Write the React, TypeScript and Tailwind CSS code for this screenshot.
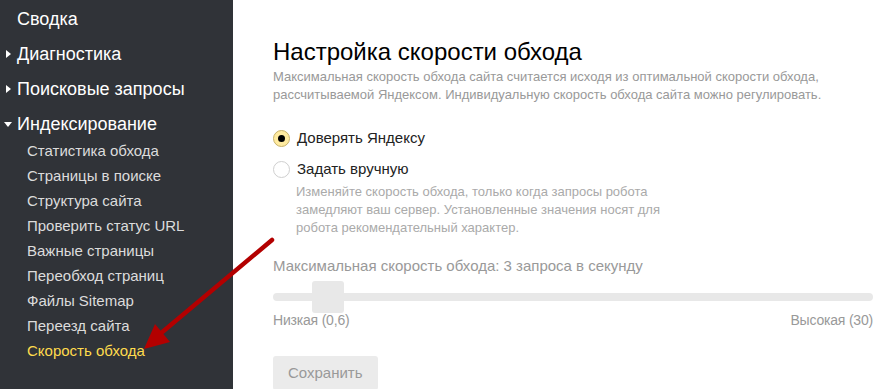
import React from "react";

const font = { fontFamily: '"Liberation Sans", Arial, sans-serif' };

function Caret({ down }: { down?: boolean }) {
  return down ? (
    <svg width="8" height="6" viewBox="0 0 8 6" className="absolute left-[4px] top-[10px]">
      <path d="M0 0 L8 0 L4 5 Z" fill="#fff" />
    </svg>
  ) : (
    <svg width="6" height="8" viewBox="0 0 6 8" className="absolute left-[6px] top-[8px]">
      <path d="M0 0 L5 4 L0 8 Z" fill="#fff" />
    </svg>
  );
}

export default function App() {
  const sub = [
    "Статистика обхода",
    "Страницы в поиске",
    "Структура сайта",
    "Проверить статус URL",
    "Важные страницы",
    "Переобход страниц",
    "Файлы Sitemap",
    "Переезд сайта",
  ];
  return (
    <div className="relative flex w-[887px] h-[389px] overflow-hidden bg-white" style={font}>
      <aside className="w-[233px] shrink-0 bg-[#303338] text-white pt-[7px]">
        <div className="pl-[17px] text-[18px] leading-[24px] h-[35px]">Сводка</div>
        <div className="relative pl-[17px] text-[18px] leading-[24px] h-[35px]">
          <Caret />
          Диагностика
        </div>
        <div className="relative pl-[17px] text-[18px] leading-[24px] h-[35px]">
          <Caret />
          Поисковые запросы
        </div>
        <div className="relative pl-[17px] text-[18px] leading-[24px] h-[29px]">
          <Caret down />
          Индексирование
        </div>
        <ul className="pl-[27px] text-[15px] text-[#dcdcdc]">
          {sub.map((s) => (
            <li key={s} className="h-[25px] leading-[20px]">
              {s}
            </li>
          ))}
          <li className="h-[25px] leading-[20px] text-[#ffdb4d]">Скорость обхода</li>
        </ul>
      </aside>
      <main className="flex-1 pl-[40px] pt-[37px]">
        <h1 className="text-[24px] leading-[30px] text-[#000]">Настройка скорости обхода</h1>
        <p className="mt-[1px] text-[13px] leading-[18px] text-[#999]">
          Максимальная скорость обхода сайта считается исходя из оптимальной скорости обхода,
          <br />
          рассчитываемой Яндексом. Индивидуальную скорость обхода сайта можно регулировать.
        </p>
        <div className="mt-[24px] flex items-center gap-[7px] h-[20px]">
          <span className="w-[17px] h-[17px] rounded-full bg-[#ffeba0] border border-[#c7b16a] flex items-center justify-center">
            <span className="w-[7px] h-[7px] rounded-full bg-black" />
          </span>
          <span className="text-[15px] text-[#222]">Доверять Яндексу</span>
        </div>
        <div className="mt-[11px] flex items-center gap-[7px] h-[20px]">
          <span className="w-[17px] h-[17px] rounded-full bg-white border border-[#cfcfcf]" />
          <span className="text-[15px] text-[#222]">Задать вручную</span>
        </div>
        <p className="pl-[23px] mt-[4px] text-[13px] leading-[18px] text-[#aaa]">
          Изменяйте скорость обхода, только когда запросы робота
          <br />
          замедляют ваш сервер. Установленные значения носят для
          <br />
          робота рекомендательный характер.
        </p>
        <div className="mt-[19px] text-[15px] leading-[20px] text-[#999]">
          Максимальная скорость обхода: 3 запроса в секунду
        </div>
        <div className="relative mt-[5px] w-[600px] h-[32px] flex items-center">
          <div className="w-full h-[8px] rounded-full bg-[#e8e8e8]" />
          <div className="absolute left-[39px] top-0 w-[32px] h-[32px] rounded-[3px] bg-[#e8e8e8]" />
        </div>
        <div className="mt-[-2px] w-[600px] flex justify-between text-[14px] leading-[18px] text-[#999] tracking-[-0.2px]">
          <span>Низкая (0,6)</span>
          <span>Высокая (30)</span>
        </div>
        <button className="mt-[27px] h-[34px] px-[15px] rounded-[3px] bg-[#ebebeb] text-[15px] text-[#999]">
          Сохранить
        </button>
      </main>
      <svg
        className="absolute left-0 top-0 pointer-events-none"
        width="887"
        height="389"
        viewBox="0 0 887 389"
      >
        <path d="M272 240 L160 334" stroke="#b30000" strokeWidth="4.5" strokeLinecap="round" />
        <path d="M144 349 L155 324 L170 342 Z" fill="#b30000" />
      </svg>
    </div>
  );
}
